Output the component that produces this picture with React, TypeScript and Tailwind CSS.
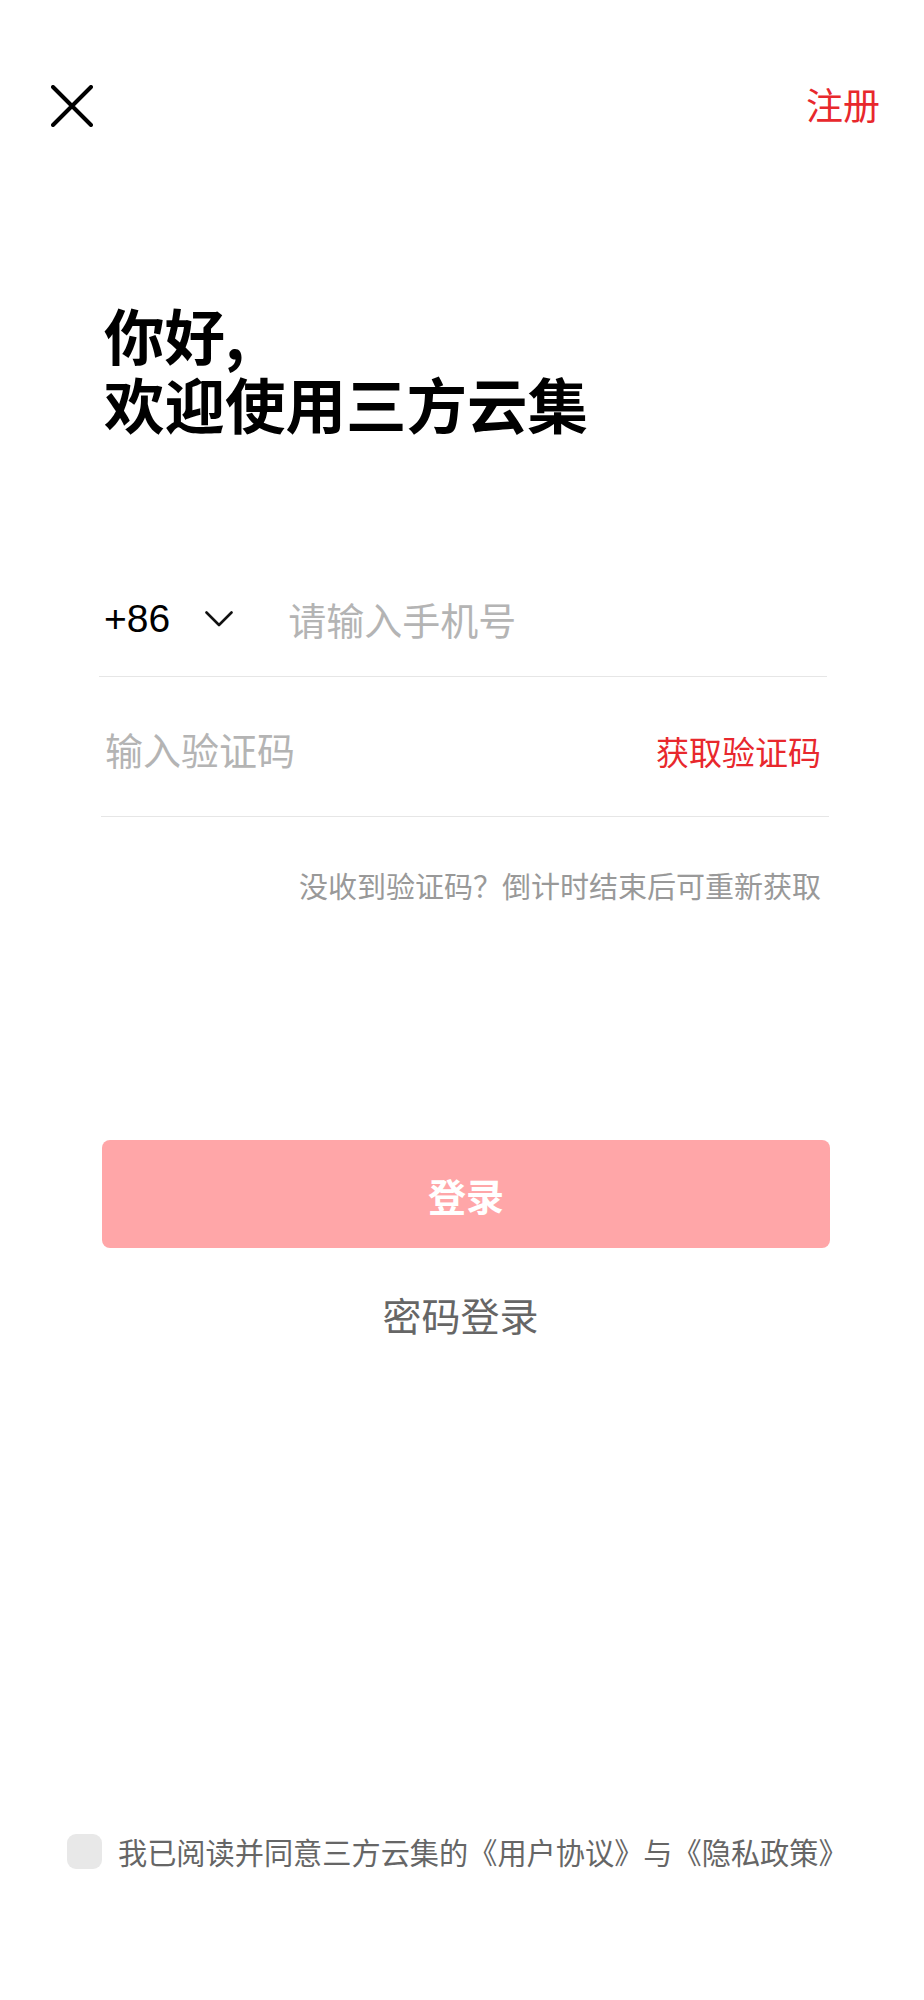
import React, { useState } from "react";

const CJK = "font-['Noto_Sans_CJK_SC','Noto_Sans',sans-serif]";

const CloseIcon = () => (
  <svg width="42" height="42" viewBox="0 0 42 42" fill="none">
    <path d="M2 2L40 40M40 2L2 40" stroke="#000" strokeWidth="4" strokeLinecap="round" />
  </svg>
);

const Chevron = () => (
  <svg width="28" height="16" viewBox="0 0 28 16" fill="none">
    <path d="M1.5 1.5L14 14L26.5 1.5" stroke="#111" strokeWidth="2.6" strokeLinecap="round" strokeLinejoin="round" />
  </svg>
);

const App = () => {
  const [agreed, setAgreed] = useState(false);

  return (
    <div className={`w-[924px] min-h-[2000px] bg-white flex flex-col ${CJK}`}>
      {/* Top bar */}
      <div className="mt-[85px] h-[42px] pl-[51px] pr-[44px] flex items-center justify-between">
        <button className="w-[42px] h-[42px]">
          <CloseIcon />
        </button>
        <span className="-mt-[4px] text-[37px] leading-none text-[#e8282d]">注册</span>
      </div>

      {/* Greeting */}
      <h1 className="mt-[172px] pl-[104px] text-[60.5px] leading-[69px] font-bold text-black">
        <span className="block">你好,</span>
        <span className="block">欢迎使用三方云集</span>
      </h1>

      {/* Phone row */}
      <div className="mt-[124px] mx-[99px] w-[728px] h-[116px] flex items-center border-b border-[#e6e6e6]">
        <span className="ml-[5px] text-[39px] text-black font-['Liberation_Sans',sans-serif] leading-none">+86</span>
        <span className="ml-[35px] flex items-center">
          <Chevron />
        </span>
        <input
          type="text"
          placeholder="请输入手机号"
          className="ml-[55px] flex-1 text-[38px] leading-none bg-transparent outline-none placeholder:text-[#b4b4b4]"
        />
      </div>

      {/* Code row */}
      <div className="ml-[101px] w-[728px] h-[140px] pt-[4px] flex items-center justify-between border-b border-[#e6e6e6]">
        <input
          type="text"
          placeholder="输入验证码"
          className="ml-[4px] w-[300px] text-[38px] leading-none bg-transparent outline-none placeholder:text-[#b4b4b4]"
        />
        <button className="mr-[8px] -mb-[6px] text-[33px] leading-none text-[#e8282d]">获取验证码</button>
      </div>

      {/* Hint */}
      <p className="mt-[51px] w-[829px] text-right pr-[8px] text-[29px] leading-[34px] text-[#999999]">
        没收到验证码？倒计时结束后可重新获取
      </p>

      {/* Login button */}
      <button className="mt-[238px] ml-[102px] w-[728px] h-[108px] rounded-lg bg-[#ffa6a8] text-white text-[38px] font-semibold">
        登录
      </button>

      <button className="mt-[42px] self-center ml-[-3px] text-[39px] leading-[48px] text-[#666666]">
        密码登录
      </button>

      {/* Agreement */}
      <div className="mt-[495px] pl-[67px] flex items-center">
        <button
          onClick={() => setAgreed(!agreed)}
          className={`w-[35px] h-[35px] rounded-[9px] ${agreed ? "bg-[#e8282d]" : "bg-[#e8e8e8]"}`}
        />
        <span className="ml-[16px] text-[29.2px] leading-[36px] text-[#666666]">
          我已阅读并同意三方云集的《用户协议》与《隐私政策》
        </span>
      </div>
    </div>
  );
};

export default App;
